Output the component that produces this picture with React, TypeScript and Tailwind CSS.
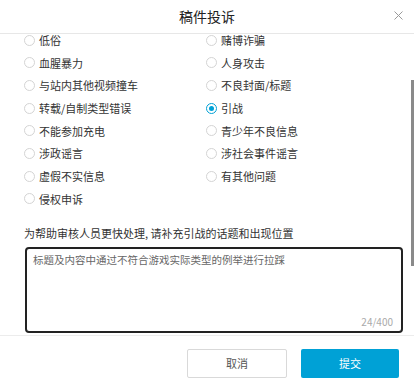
import { Fragment } from "react";

const options: [string, string | null][] = [
  ["低俗", "赌博诈骗"],
  ["血腥暴力", "人身攻击"],
  ["与站内其他视频撞车", "不良封面/标题"],
  ["转载/自制类型错误", "引战"],
  ["不能参加充电", "青少年不良信息"],
  ["涉政谣言", "涉社会事件谣言"],
  ["虚假不实信息", "有其他问题"],
  ["侵权申诉", null],
];

function Radio({ label, checked }: { label: string; checked?: boolean }) {
  return (
    <label className="flex items-center h-[12px] gap-[4px]">
      {checked ? (
        <span className="w-[11px] h-[11px] rounded-full border border-[#00a1d6] flex items-center justify-center">
          <span className="w-[5px] h-[5px] rounded-full bg-[#00a1d6]" />
        </span>
      ) : (
        <span className="w-[11px] h-[11px] rounded-full border border-[#d4d4d4]" />
      )}
      <span className="text-[11px] leading-[12px] text-[#333]">{label}</span>
    </label>
  );
}

export default function App() {
  return (
    <div
      className="relative w-[414px] h-[387px] bg-white overflow-hidden flex flex-col"
      style={{ fontFamily: '"Noto Sans CJK SC", "Noto Sans", sans-serif' }}
    >
      {/* header */}
      <div className="relative h-[34px] shrink-0 border-b border-[#e7e7e7] flex items-center justify-center">
        <span className="text-[14px] text-[#222]">稿件投诉</span>
        <svg className="absolute right-[11px] top-[11px]" width="9" height="9" viewBox="0 0 9 9">
          <path d="M0.5 0.5 L8.5 8.5 M8.5 0.5 L0.5 8.5" stroke="#9a9a9a" strokeWidth="1" />
        </svg>
      </div>

      {/* body */}
      <div className="h-[301px] shrink-0 pl-[24px]">
        <div className="grid grid-cols-[182px_1fr] auto-rows-[22.7px] items-start">
          {options.map(([a, b]) => (
            <Fragment key={a}>
              <Radio label={a} />
              {b ? <Radio label={b} checked={b === "引战"} /> : <div />}
            </Fragment>
          ))}
        </div>
        <p className="mt-[9px] text-[11px] leading-[16px] text-[#333]">
          为帮助审核人员更快处理, 请补充引战的话题和出现位置
        </p>
        <div className="relative mt-[6px] ml-[1px] w-[378px] h-[86px] border-2 border-[#222] rounded-[4px] px-[6px] pt-[3px]">
          <p className="text-[10.5px] text-[#666]">标题及内容中通过不符合游戏实际类型的例举进行拉踩</p>
          <span className="absolute right-[8px] bottom-[2px] text-[10px] text-[#aaa]">24/400</span>
        </div>
      </div>

      {/* footer */}
      <div className="flex-1 border-t border-[#ececec] flex justify-end items-start gap-[14px] pt-[13px] pr-[15px]">
        <button className="w-[100px] h-[29px] border border-[#d9d9d9] rounded-[2px] text-[11px] text-[#555] bg-white">
          取消
        </button>
        <button className="w-[98px] h-[29px] rounded-[2px] text-[11px] text-white bg-[#00a1d6]">
          提交
        </button>
      </div>

      {/* scrollbar thumb */}
      <div className="absolute right-0 top-[80px] w-[3px] h-[186px] bg-[#8a8a8a]" />
    </div>
  );
}
